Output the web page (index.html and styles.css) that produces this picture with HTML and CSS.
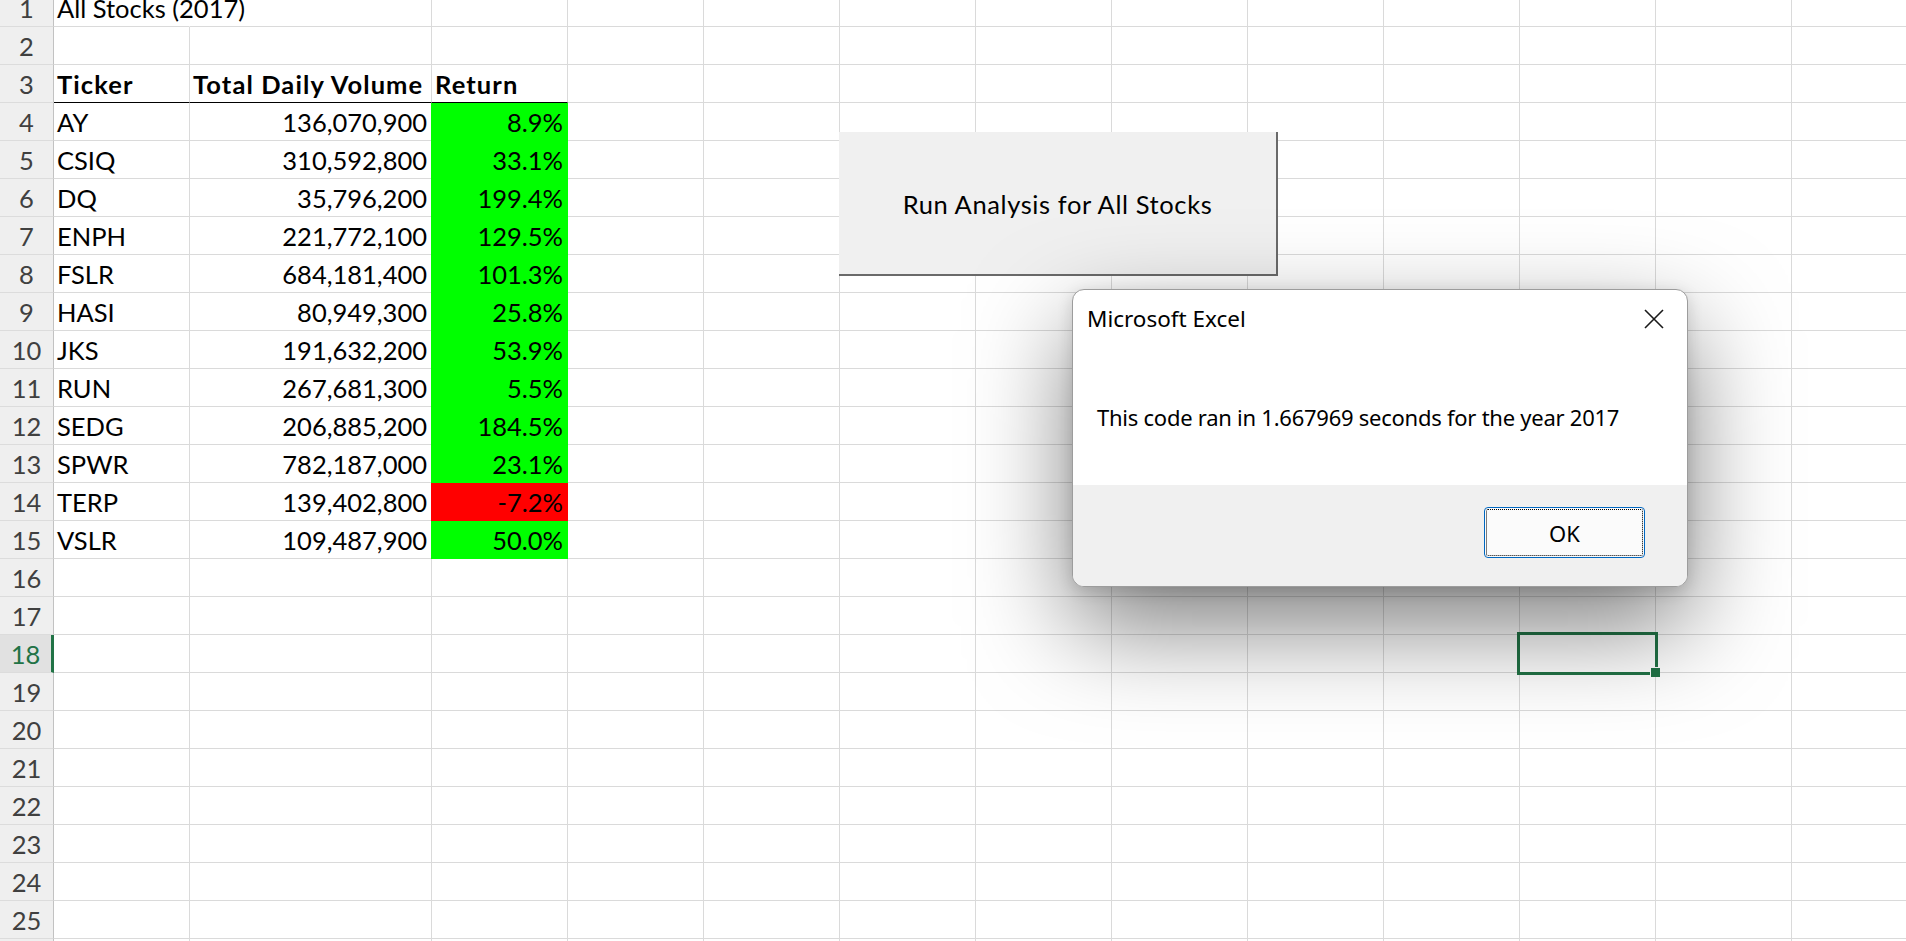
FILE: index.html
```html
<!DOCTYPE html>
<html>
<head>
<meta charset="utf-8">
<title>All Stocks (2017)</title>
<link rel="stylesheet" href="styles.css">
</head>
<body>
<div class="app">
  <div class="sheet">
    <div class="row"><div class="cell rh">1</div><div class="cell spill">All Stocks (2017)</div><div class="cell"></div><div class="cell"></div><div class="cell rest"></div></div>
    <div class="row"><div class="cell rh">2</div><div class="cell"></div><div class="cell"></div><div class="cell"></div><div class="cell rest"></div></div>
    <div class="row"><div class="cell rh">3</div><div class="cell b hdr">Ticker</div><div class="cell b hdr">Total Daily Volume</div><div class="cell b hdr">Return</div><div class="cell rest"></div></div>
    <div class="row"><div class="cell rh">4</div><div class="cell">AY</div><div class="cell num">136,070,900</div><div class="cell num g">8.9%</div><div class="cell rest"></div></div>
    <div class="row"><div class="cell rh">5</div><div class="cell">CSIQ</div><div class="cell num">310,592,800</div><div class="cell num g">33.1%</div><div class="cell rest"></div></div>
    <div class="row"><div class="cell rh">6</div><div class="cell">DQ</div><div class="cell num">35,796,200</div><div class="cell num g">199.4%</div><div class="cell rest"></div></div>
    <div class="row"><div class="cell rh">7</div><div class="cell">ENPH</div><div class="cell num">221,772,100</div><div class="cell num g">129.5%</div><div class="cell rest"></div></div>
    <div class="row"><div class="cell rh">8</div><div class="cell">FSLR</div><div class="cell num">684,181,400</div><div class="cell num g">101.3%</div><div class="cell rest"></div></div>
    <div class="row"><div class="cell rh">9</div><div class="cell">HASI</div><div class="cell num">80,949,300</div><div class="cell num g">25.8%</div><div class="cell rest"></div></div>
    <div class="row"><div class="cell rh">10</div><div class="cell">JKS</div><div class="cell num">191,632,200</div><div class="cell num g">53.9%</div><div class="cell rest"></div></div>
    <div class="row"><div class="cell rh">11</div><div class="cell">RUN</div><div class="cell num">267,681,300</div><div class="cell num g">5.5%</div><div class="cell rest"></div></div>
    <div class="row"><div class="cell rh">12</div><div class="cell">SEDG</div><div class="cell num">206,885,200</div><div class="cell num g">184.5%</div><div class="cell rest"></div></div>
    <div class="row"><div class="cell rh">13</div><div class="cell">SPWR</div><div class="cell num">782,187,000</div><div class="cell num g">23.1%</div><div class="cell rest"></div></div>
    <div class="row"><div class="cell rh">14</div><div class="cell">TERP</div><div class="cell num">139,402,800</div><div class="cell num r">-7.2%</div><div class="cell rest"></div></div>
    <div class="row"><div class="cell rh">15</div><div class="cell">VSLR</div><div class="cell num">109,487,900</div><div class="cell num g">50.0%</div><div class="cell rest"></div></div>
    <div class="row"><div class="cell rh">16</div><div class="cell"></div><div class="cell"></div><div class="cell"></div><div class="cell rest"></div></div>
    <div class="row"><div class="cell rh">17</div><div class="cell"></div><div class="cell"></div><div class="cell"></div><div class="cell rest"></div></div>
    <div class="row"><div class="cell rh sel">18</div><div class="cell"></div><div class="cell"></div><div class="cell"></div><div class="cell rest active"><div class="selection"><div class="handle"></div></div></div></div>
    <div class="row"><div class="cell rh">19</div><div class="cell"></div><div class="cell"></div><div class="cell"></div><div class="cell rest"></div></div>
    <div class="row"><div class="cell rh">20</div><div class="cell"></div><div class="cell"></div><div class="cell"></div><div class="cell rest"></div></div>
    <div class="row"><div class="cell rh">21</div><div class="cell"></div><div class="cell"></div><div class="cell"></div><div class="cell rest"></div></div>
    <div class="row"><div class="cell rh">22</div><div class="cell"></div><div class="cell"></div><div class="cell"></div><div class="cell rest"></div></div>
    <div class="row"><div class="cell rh">23</div><div class="cell"></div><div class="cell"></div><div class="cell"></div><div class="cell rest"></div></div>
    <div class="row"><div class="cell rh">24</div><div class="cell"></div><div class="cell"></div><div class="cell"></div><div class="cell rest"></div></div>
    <div class="row"><div class="cell rh">25</div><div class="cell"></div><div class="cell"></div><div class="cell"></div><div class="cell rest"></div></div>
    <div class="row"><div class="cell rh"></div><div class="cell"></div><div class="cell"></div><div class="cell"></div><div class="cell rest"></div></div>
  </div>

  <div class="macro-btn">Run Analysis for All Stocks</div>

  <div class="dialog">
    <div class="dlg-head">
      <span class="dlg-title">Microsoft Excel</span>
      <svg class="dlg-close" width="20" height="20" viewBox="0 0 20 20"><path d="M1 1 L19 19 M19 1 L1 19" stroke="#1a1a1a" stroke-width="1.6" fill="none"/></svg>
    </div>
    <div class="dlg-body">This code ran in 1.667969 seconds for the year 2017</div>
    <div class="dlg-foot"><button class="ok">OK</button></div>
  </div>
</div>
</body>
</html>
```
FILE: styles.css
```css
html, body {
  margin: 0;
  padding: 0;
  background: #ffffff;
  overflow: hidden;
}

.app {
  position: relative;
  width: 1906px;
  height: 941px;
  overflow: hidden;
  font-family: Lato, "Liberation Sans", sans-serif;
}

.sheet {
  margin-top: -11px;
}

.row {
  display: grid;
  grid-template-columns: 54px 136px 242px 136px 1fr;
  height: 38px;
}

.cell {
  box-sizing: border-box;
  height: 38px;
  border-right: 1px solid #dadada;
  border-bottom: 1px solid #dadada;
  padding: 0 4px 0 3px;
  font-size: 25.5px;
  line-height: 38px;
  white-space: nowrap;
  color: #000;
}

.spill {
  border-right-color: transparent;
  overflow: visible;
}

.rh {
  background: #efefef;
  border-right-color: #c2c2c2;
  border-bottom-color: #dcdcdc;
  text-align: center;
  color: #404040;
  padding: 0;
}

.rh.sel {
  background: #e1e1e1;
  color: #217346;
  border-right: 3px solid #217346;
}

.b {
  font-weight: 700;
  letter-spacing: 1.1px;
}

.hdr {
  border-bottom-color: #000;
}

.num {
  text-align: right;
}

.g {
  background: #00ff00;
  border-color: #00ff00;
  box-shadow: -1px 0 0 #00ff00;
}

.r {
  background: #ff0000;
  border-color: #ff0000;
  box-shadow: -1px 0 0 #ff0000;
}

.rest {
  border-right: none;
  padding: 0;
  background: repeating-linear-gradient(to right, transparent 0 135px, #dadada 135px 136px);
}

.active {
  position: relative;
}

.selection {
  position: absolute;
  left: 949px;
  top: -3px;
  width: 141px;
  height: 43px;
  box-sizing: border-box;
  border: 3px solid #217346;
}

.handle {
  position: absolute;
  left: 130px;
  top: 32px;
  width: 10px;
  height: 10px;
  box-sizing: border-box;
  background: #217346;
  border-left: 1px solid #fff;
  border-top: 1px solid #fff;
}

.macro-btn {
  position: absolute;
  left: 839px;
  top: 132px;
  width: 439px;
  height: 144px;
  box-sizing: border-box;
  background: #f0f0f0;
  border-right: 2px solid #6a6a6a;
  border-bottom: 2px solid #6a6a6a;
  display: flex;
  align-items: center;
  justify-content: center;
  font-size: 25.5px;
  letter-spacing: 0.6px;
  color: #000;
  padding-top: 2px;
}

.dialog {
  position: absolute;
  left: 1072px;
  top: 289px;
  width: 616px;
  height: 298px;
  box-sizing: border-box;
  border: 1px solid #9c9c9c;
  border-radius: 12px;
  background: #fff;
  overflow: hidden;
  display: flex;
  flex-direction: column;
  font-family: "Noto Sans", "Open Sans", sans-serif;
  color: #000;
  box-shadow: 0 40px 100px rgba(0, 0, 0, 0.5), 0 4px 16px rgba(0, 0, 0, 0.14);
  z-index: 2;
}

.dlg-head {
  display: flex;
  justify-content: space-between;
  align-items: center;
  padding: 14px 23px 0 14px;
  height: 30px;
}

.dlg-title {
  font-size: 22.5px;
  line-height: 30px;
}

.dlg-close {
  display: block;
}

.dlg-body {
  flex: 1;
  padding: 68px 0 0 24px;
  font-size: 22px;
  line-height: 30px;
  letter-spacing: -0.25px;
}

.dlg-foot {
  height: 101px;
  box-sizing: border-box;
  background: #f0f0f0;
  display: flex;
  justify-content: flex-end;
  align-items: flex-start;
  padding: 22px 42px 0 0;
}

.ok {
  width: 161px;
  height: 51px;
  box-sizing: border-box;
  margin: 0;
  padding: 0;
  border: 1px solid #0067c0;
  border-radius: 4px;
  background: #fbfbfb;
  outline: 1px dotted #000;
  outline-offset: -3px;
  font-family: "Noto Sans", "Open Sans", sans-serif;
  font-size: 22px;
  color: #000;
  display: flex;
  align-items: center;
  justify-content: center;
}
```
